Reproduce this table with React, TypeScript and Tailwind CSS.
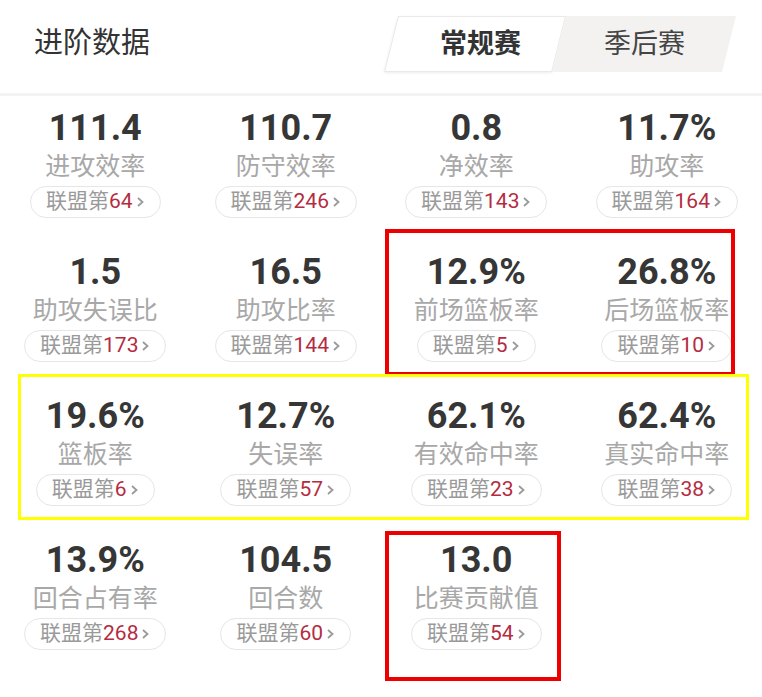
import React from "react";

type Stat = { value: string; label: string; rank: number };

const stats: Stat[] = [
  { value: "111.4", label: "进攻效率", rank: 64 },
  { value: "110.7", label: "防守效率", rank: 246 },
  { value: "0.8", label: "净效率", rank: 143 },
  { value: "11.7%", label: "助攻率", rank: 164 },
  { value: "1.5", label: "助攻失误比", rank: 173 },
  { value: "16.5", label: "助攻比率", rank: 144 },
  { value: "12.9%", label: "前场篮板率", rank: 5 },
  { value: "26.8%", label: "后场篮板率", rank: 10 },
  { value: "19.6%", label: "篮板率", rank: 6 },
  { value: "12.7%", label: "失误率", rank: 57 },
  { value: "62.1%", label: "有效命中率", rank: 23 },
  { value: "62.4%", label: "真实命中率", rank: 38 },
  { value: "13.9%", label: "回合占有率", rank: 268 },
  { value: "104.5", label: "回合数", rank: 60 },
  { value: "13.0", label: "比赛贡献值", rank: 54 },
];

const font = { fontFamily: 'Roboto, "Noto Sans CJK SC", sans-serif' };

function StatCell({ s }: { s: Stat }) {
  return (
    <div className="flex flex-col items-center pt-[12px] pb-[22px]">
      <div className="text-[36px] leading-[40px] font-bold text-[#363636]">{s.value}</div>
      <div className="mt-[3px] text-[25px] leading-[32px] text-[#a8a8a8]">{s.label}</div>
      <div className="mt-[3px] h-[32px] flex items-center rounded-full border-[1.5px] border-[#e6e6e6] px-[15px] text-[21px] text-[#9a9a9a]">
        <span>联盟第</span>
        <span className="text-[#b42c3f]">{s.rank}</span>
        <svg width="9" height="12" viewBox="0 0 9 12" className="ml-[3px]">
          <path d="M2 2 L6.5 6 L2 10" fill="none" stroke="#9a9a9a" strokeWidth="1.8" />
        </svg>
      </div>
    </div>
  );
}

export default function App() {
  return (
    <div className="relative w-[762px] h-[697px] bg-white overflow-hidden" style={font}>
      {/* Header */}
      <div className="h-[96px] flex items-center justify-between pb-[6px] border-b-[3px] border-[#f3f3f3]">
        <div className="pl-[34px] text-[29px] text-[#333]">进阶数据</div>
        <div className="mr-[33px] flex h-[56px] skew-x-[-14deg]">
          <div className="w-[168px] flex items-center justify-center bg-white border border-[#e9e9e9] shadow-[0_1px_3px_rgba(0,0,0,0.08)]">
            <span className="skew-x-[14deg] ml-[10px] text-[27px] font-bold text-[#333]">常规赛</span>
          </div>
          <div className="w-[170px] flex items-center justify-center bg-[#f3f2f0]">
            <span className="skew-x-[14deg] text-[27px] text-[#444]">季后赛</span>
          </div>
        </div>
      </div>

      {/* Grid */}
      <div className="grid grid-cols-4">
        {stats.map((s) => (
          <StatCell key={s.label} s={s} />
        ))}
      </div>

      {/* Annotation boxes */}
      <div className="absolute left-[385px] top-[229px] w-[350px] h-[147px] border-[4px] border-[#ee0000]" />
      <div className="absolute left-[18px] top-[374px] w-[731px] h-[146px] border-[3px] border-[#ffff00]" />
      <div className="absolute left-[385px] top-[531px] w-[176px] h-[150px] border-[4px] border-[#ee0000]" />
    </div>
  );
}
